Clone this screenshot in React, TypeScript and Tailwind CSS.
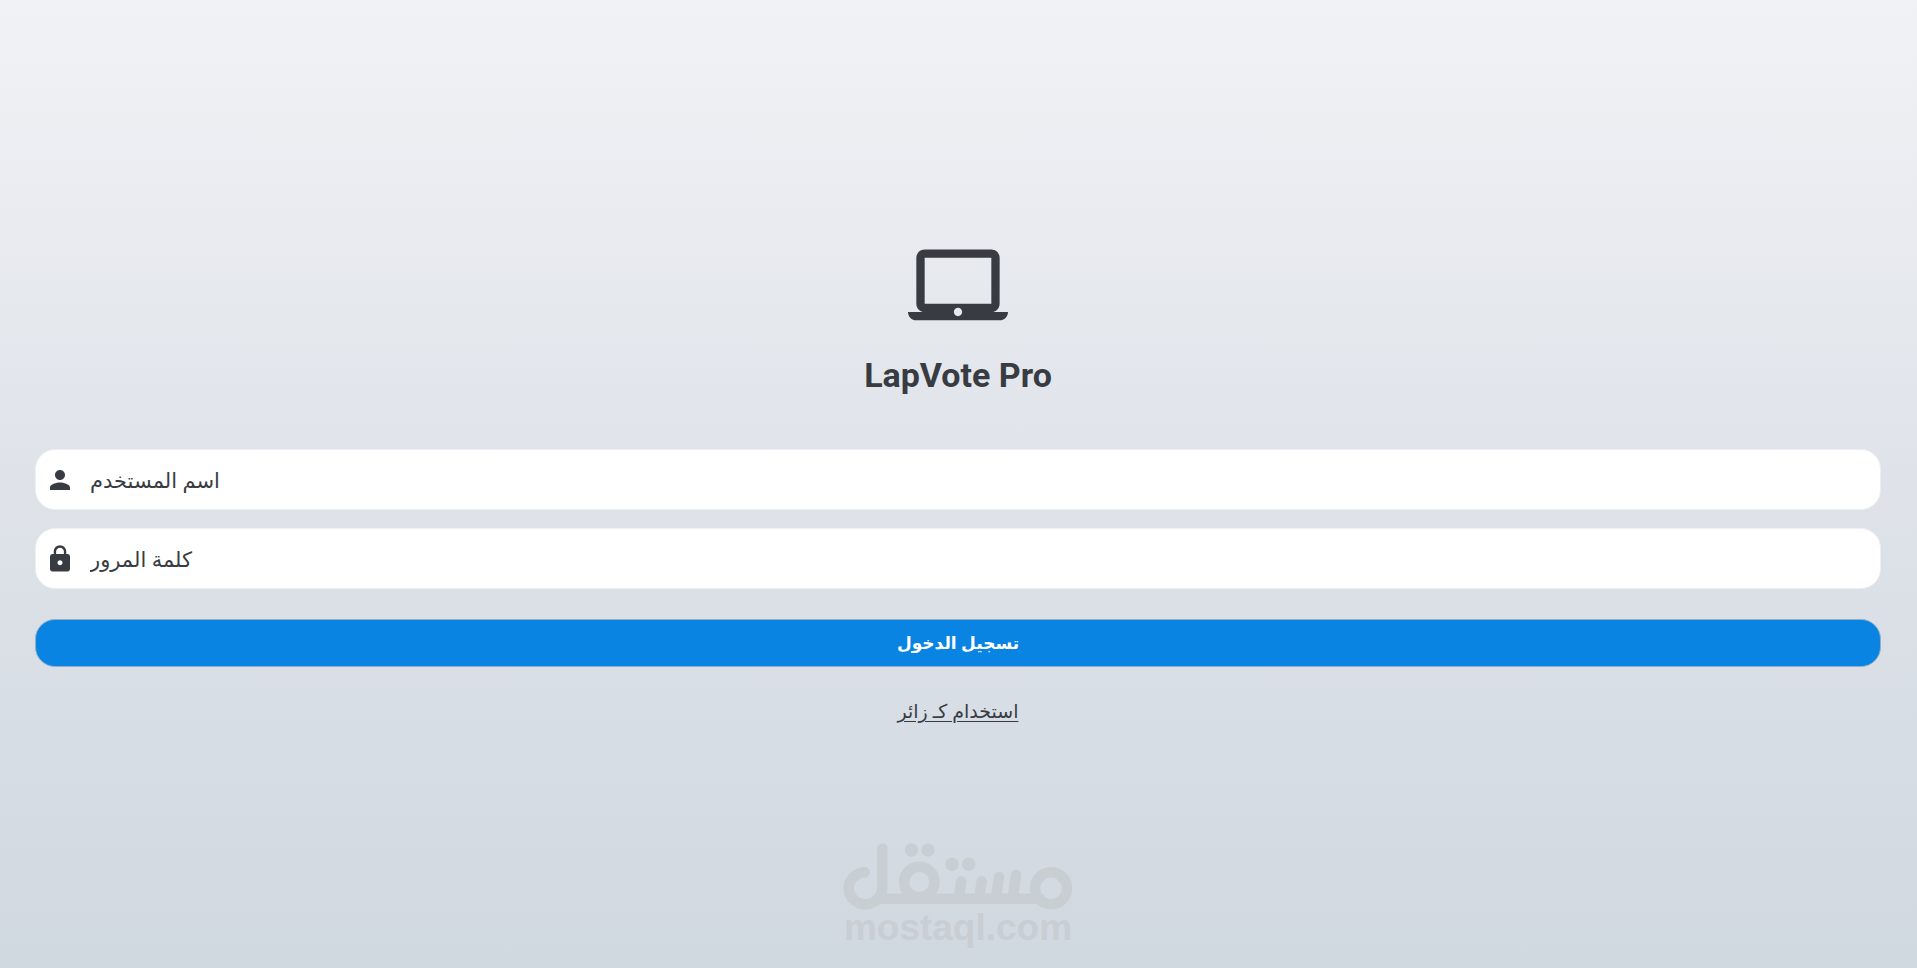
import type { ReactNode } from "react";
import { MdLaptopMac, MdLock, MdPerson } from "react-icons/md";

type FieldProps = {
  id: string;
  type: string;
  label: string;
  icon: ReactNode;
};

function Field({ id, type, label, icon }: FieldProps) {
  return (
    <div className="flex h-[61px] items-center gap-[15px] rounded-[20px] border border-[#eceff3] bg-white px-[9px]">
      <label htmlFor={id} aria-label={label} className="shrink-0">
        {icon}
      </label>
      <input
        id={id}
        type={type}
        placeholder={label}
        dir="rtl"
        className="h-full min-w-0 flex-1 bg-transparent text-left text-[21px] text-[#383c42] outline-none placeholder:text-[#383c42]"
      />
    </div>
  );
}

function Watermark() {
  return (
    <div className="pointer-events-none absolute inset-x-0 bottom-[23px] flex flex-col items-center pr-px text-[#c9ced3]">
      <svg viewBox="23 23 230 68" className="h-[68px] w-[230px]" fill="none" stroke="currentColor" strokeWidth="10.5" strokeLinecap="round">
        <circle cx="231" cy="68.3" r="16" />
        <path d="M58 78.7H220" />
        <path d="M62.3 28.5V68.3A16.8 16 0 1 1 44.7 52.3" />
        <circle cx="99.3" cy="62" r="15.2" />
        <path d="M141.3 61.3L138.7 78M161.7 61.3L159.3 78M179 57L176 78M196 54.7L192.7 78" />
        <g fill="currentColor" stroke="none">
          <circle cx="91.3" cy="30" r="6.7" />
          <circle cx="108" cy="30" r="6.7" />
          <circle cx="132" cy="44.3" r="6.7" />
          <circle cx="148.7" cy="44.3" r="6.7" />
        </g>
      </svg>
      <p className="text-[37px] leading-[34px] font-bold font-['Liberation_Sans',sans-serif]">mostaql.com</p>
    </div>
  );
}

export default function App() {
  return (
    <main className="relative flex min-h-screen flex-col justify-center bg-linear-to-b from-[#f1f2f6] via-[#dfe3e9] to-[#d0d8e0] pr-9 pl-[35px] text-[#383c42] font-['Noto_Sans','DejaVu_Sans',sans-serif]">
      <div className="flex flex-col items-center">
        <MdLaptopMac className="size-[100px]" />
        <h1 className="mt-2 text-[34px] leading-[60px] font-bold font-['Roboto',sans-serif]">LapVote Pro</h1>
      </div>

      <form className="mt-11 flex flex-col" onSubmit={(e) => e.preventDefault()}>
        <div className="flex flex-col gap-[18px]">
          <Field id="username" type="text" label="اسم المستخدم" icon={<MdPerson className="size-[30px]" />} />
          <Field id="password" type="password" label="كلمة المرور" icon={<MdLock className="size-[30px]" />} />
        </div>
        <button type="submit" dir="rtl" className="mt-[30px] h-12 rounded-[20px] border border-[#8fb0cc] bg-[#0984e3] text-[17px] font-semibold text-white">
          تسجيل الدخول
        </button>
      </form>

      <a href="#guest" dir="rtl" className="mt-6 self-center text-[19px] leading-[40px] underline underline-offset-3">
        استخدام كـ زائر
      </a>

      <Watermark />
    </main>
  );
}
